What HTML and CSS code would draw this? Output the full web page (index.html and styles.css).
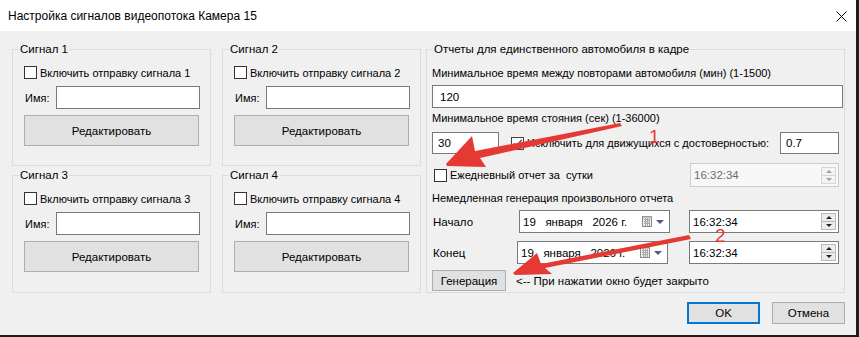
FILE: index.html
```html
<!DOCTYPE html>
<html>
<head>
  <title>Настройка сигналов видеопотока</title>
  <link rel="stylesheet" href="styles.css">
</head>
<body>

<div class="window">
  <div class="titlebar">
    <span class="title">Настройка сигналов видеопотока Камера 15</span>
    <span class="close">
      <svg width="11" height="11" viewBox="0 0 11 11"><path d="M0.5 0.5L10.5 10.5M10.5 0.5L0.5 10.5" stroke="#000" stroke-width="1"/></svg>
    </span>
  </div>

  <div class="client">
    <div class="panels">
      <div class="signals">
        <fieldset class="group signal">
          <legend>Сигнал 1</legend>
          <div class="signal-body">
            <label class="check-row"><span class="box"></span>Включить отправку сигнала 1</label>
            <div class="name-row"><span class="name-label">Имя:</span><div class="field name-field"></div></div>
            <div class="btn edit">Редактировать</div>
          </div>
        </fieldset>
        <fieldset class="group signal">
          <legend>Сигнал 2</legend>
          <div class="signal-body">
            <label class="check-row"><span class="box"></span>Включить отправку сигнала 2</label>
            <div class="name-row"><span class="name-label">Имя:</span><div class="field name-field"></div></div>
            <div class="btn edit">Редактировать</div>
          </div>
        </fieldset>
        <fieldset class="group signal tall">
          <legend>Сигнал 3</legend>
          <div class="signal-body">
            <label class="check-row"><span class="box"></span>Включить отправку сигнала 3</label>
            <div class="name-row"><span class="name-label">Имя:</span><div class="field name-field"></div></div>
            <div class="btn edit">Редактировать</div>
          </div>
        </fieldset>
        <fieldset class="group signal tall">
          <legend>Сигнал 4</legend>
          <div class="signal-body">
            <label class="check-row"><span class="box"></span>Включить отправку сигнала 4</label>
            <div class="name-row"><span class="name-label">Имя:</span><div class="field name-field"></div></div>
            <div class="btn edit">Редактировать</div>
          </div>
        </fieldset>
      </div>

      <fieldset class="group reports">
        <legend>Отчеты для единственного автомобиля в кадре</legend>
        <div class="reports-body">
          <div class="caption first">Минимальное время между повторами автомобиля (мин) (1-1500)</div>
          <div class="field repeat-field">120</div>
          <div class="caption">Минимальное время стояния (сек) (1-36000)</div>

          <div class="row stand-row">
            <div class="field small-field">30</div>
            <label class="check-row inline"><span class="box checked">
              <svg width="11" height="11" viewBox="0 0 11 11"><path d="M1.5 5.5L4.2 8.5L9.8 1.8" fill="none" stroke="#555" stroke-width="1.4"/></svg>
            </span>Исключить для движущихся с достоверностью:</label>
            <div class="field conf-field">0.7</div>
          </div>

          <div class="row daily-row">
            <label class="check-row inline"><span class="box"></span>Ежедневный отчет за&nbsp; сутки</label>
            <div class="field time-field disabled">
              <span>16:32:34</span>
              <span class="spin"><span class="spin-btn up"></span><span class="spin-btn down"></span></span>
            </div>
          </div>

          <div class="caption section">Немедленная генерация произвольного отчета</div>

          <div class="row period-row">
            <span class="period-label">Начало</span>
            <div class="field date-field">
              <span class="date-text">19   января   2026 г.</span>
              <span class="cal">
                <svg width="12" height="13" viewBox="0 0 12 13"><rect x="1.5" y="1.5" width="9" height="10" fill="#eee" stroke="#8a8a8a"/><path d="M3 4.5H9M3 6.5H9M3 8.5H9M4.5 3V11M6.5 3V11M8.5 3V11" stroke="#a9a9a9" stroke-width="1"/><rect x="2" y="1" width="9" height="1.5" fill="#9a9a9a"/></svg>
                <span class="drop"></span>
              </span>
            </div>
            <div class="field time-field">
              <span>16:32:34</span>
              <span class="spin"><span class="spin-btn up"></span><span class="spin-btn down"></span></span>
            </div>
          </div>

          <div class="row period-row end">
            <span class="period-label short">Конец</span>
            <div class="field date-field">
              <span class="date-text">19   января   2026 г.</span>
              <span class="cal">
                <svg width="12" height="13" viewBox="0 0 12 13"><rect x="1.5" y="1.5" width="9" height="10" fill="#eee" stroke="#8a8a8a"/><path d="M3 4.5H9M3 6.5H9M3 8.5H9M4.5 3V11M6.5 3V11M8.5 3V11" stroke="#a9a9a9" stroke-width="1"/><rect x="2" y="1" width="9" height="1.5" fill="#9a9a9a"/></svg>
                <span class="drop"></span>
              </span>
            </div>
            <div class="field time-field">
              <span>16:32:34</span>
              <span class="spin"><span class="spin-btn up"></span><span class="spin-btn down"></span></span>
            </div>
          </div>

          <div class="row gen-row">
            <div class="btn gen">Генерация</div>
            <span class="hint">&lt;-- При нажатии окно будет закрыто</span>
          </div>
        </div>
      </fieldset>
    </div>

    <div class="footer">
      <div class="btn dlg ok">OK</div>
      <div class="btn dlg">Отмена</div>
    </div>
  </div>

  <!-- red annotation arrows drawn on top of the screenshot -->
  <svg class="annot" width="856" height="335" viewBox="0 0 856 335">
    <polygon points="446,164 472,136 475,151 620,123 622,126 480,158 486,167 447,166" fill="#e53a33"/>
    <polygon points="513,273 537,253 541,264 689,235 691,239 545,268 552,274 515,275" fill="#e53a33"/>
    <text x="649" y="143" class="num">1</text>
    <text x="715" y="242" class="num">2</text>
  </svg>
</div>

</body>
</html>
```

FILE: styles.css
```css
* { box-sizing: border-box; }
body { margin: 0; background: #1c1c1c; font-family: "Segoe UI", "Liberation Sans", Arial, sans-serif; font-size: 11px; color: #000; }

.window { position: relative; width: 856px; height: 335px; background: #f0f0f0; }
.titlebar { height: 31px; background: #fff; display: flex; align-items: center; justify-content: space-between; padding-left: 8px; }
.title { font-size: 12px; }
.close { width: 30px; display: flex; justify-content: center; padding-top: 1px; }

.client { padding: 11px 11px 0 12px; }
.panels { display: flex; gap: 5px; }
.signals { display: grid; grid-template-columns: 199px 199px; grid-template-rows: 124px 125px; column-gap: 11px; row-gap: 2px; }

fieldset.group { margin: 0; padding: 0; border: 1px solid #dcdcdc; min-width: 0; }
fieldset.group legend { margin-left: 6px; padding: 0 1px; line-height: 14px; font-size: 11.5px; }

.signal-body { padding: 9px 10px 0 11px; }
.check-row { display: flex; align-items: center; height: 15px; white-space: nowrap; }
.box { width: 13px; height: 13px; border: 1px solid #333; background: #fff; margin-right: 3px; flex: none; display: flex; align-items: center; justify-content: center; }
.box.checked { border-color: #444; }
.name-row { display: flex; align-items: center; margin-top: 6px; }
.name-label { width: 32px; padding-left: 1px; }
.field { flex: none; height: 23px; background: #fff; border: 1px solid #7a7a7a; display: flex; align-items: center; padding-left: 3px; white-space: pre; font-size: 11.5px; }
.name-field { width: 144px; }
.btn { flex: none; background: #e1e1e1; border: 1px solid #adadad; display: flex; align-items: center; justify-content: center; font-size: 11.5px; }
.edit { width: 175px; height: 31px; margin-top: 6px; }

.reports { width: 422px; height: 251px; }
.reports-body { padding: 0 5px 0 5px; }
.caption { line-height: 16px; margin-top: 2px; }
.caption.first { margin-top: 9px; }
.caption.section { margin-top: 3px; }
.repeat-field { width: 411px; margin-top: 4px; padding-left: 7px; }
.row { display: flex; align-items: center; }
.stand-row { margin-top: 6px; }
.small-field { width: 67px; height: 22px; padding-left: 5px; }
.check-row.inline { margin-left: 12px; }
.conf-field { width: 59px; height: 22px; margin-left: auto; padding-left: 5px; }
.daily-row { margin-top: 9px; }
.daily-row .check-row.inline { margin-left: 2px; }
.time-field { width: 150px; margin-left: auto; padding-right: 2px; }
.daily-row .time-field { height: 24px; width: 149px; }
.time-field.disabled { background: #f7f7f7; border-color: #cccccc; color: #6d6d6d; }
.spin { margin-left: auto; width: 15px; display: flex; flex-direction: column; }
.spin-btn { height: 9px; border: 1px solid #b9b9b9; background: #ececec; display: flex; align-items: center; justify-content: center; }
.spin-btn.down { margin-top: -1px; }
.spin-btn::after { content: ""; border-left: 3px solid transparent; border-right: 3px solid transparent; }
.spin-btn.up::after { border-bottom: 3px solid #222; }
.spin-btn.down::after { border-top: 3px solid #222; }
.disabled .spin-btn { border-color: #d6d6d6; background: #f3f3f3; }
.disabled .spin-btn.up::after { border-bottom-color: #a0a0a0; }
.disabled .spin-btn.down::after { border-top-color: #a0a0a0; }

.period-row { margin-top: 4px; }
.period-row.end { margin-top: 8px; }
.period-label { width: 87px; padding-left: 1px; font-size: 11.5px; }
.period-label.short { width: 85px; }
.date-field { width: 151px; }
.cal { margin-left: auto; display: flex; align-items: center; gap: 3px; padding-right: 5px; }
.drop { border-left: 4px solid transparent; border-right: 4px solid transparent; border-top: 4px solid #4b5d80; }

.gen-row { margin-top: 6px; }
.gen { width: 74px; height: 21px; }
.hint { margin-left: 10px; font-size: 11.5px; }

.footer { display: flex; justify-content: flex-end; gap: 12px; margin-top: 9px; }
.dlg { width: 73px; height: 22px; }
.ok { border: 2px solid #0078d7; }

.annot { position: absolute; left: 0; top: 0; pointer-events: none; }
.num { font-family: "Liberation Sans", Arial, sans-serif; font-size: 19px; fill: #e53a33; }
```
